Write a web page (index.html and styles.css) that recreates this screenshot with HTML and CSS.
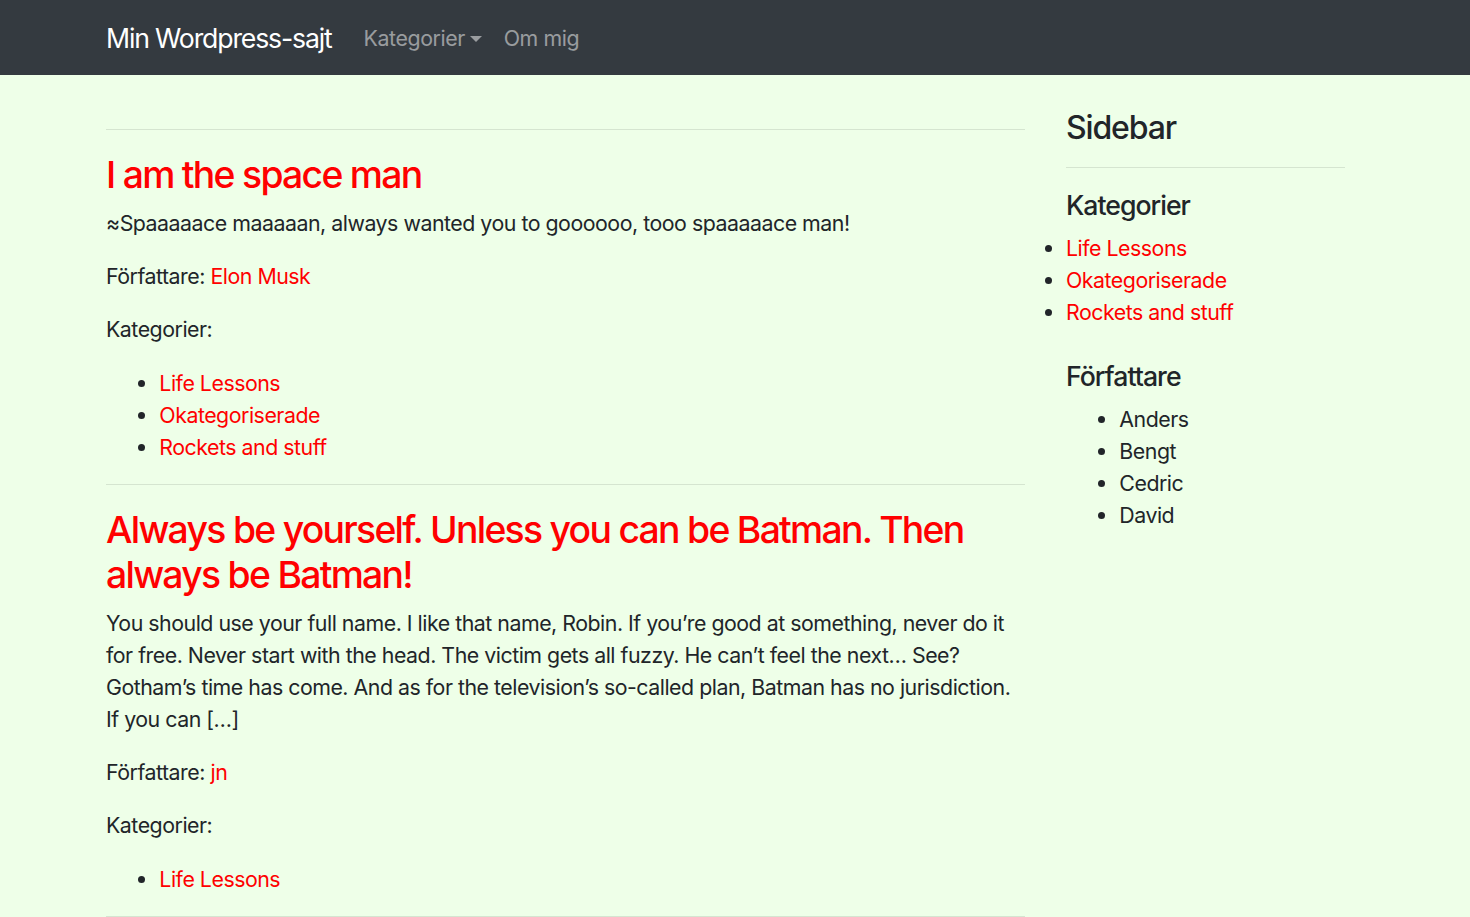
FILE: index.html
```html
<!DOCTYPE html>
<html lang="sv">
<head>
<meta charset="utf-8">
<title>Min Wordpress-sajt</title>
<link rel="stylesheet" href="styles.css">
</head>
<body>
<nav class="navbar">
  <div class="nav-inner">
    <a class="brand" href="#">Min Wordpress-sajt</a>
    <ul class="nav-links">
      <li><a class="nav-link dropdown-toggle" href="#">Kategorier</a></li>
      <li><a class="nav-link" href="#">Om mig</a></li>
    </ul>
  </div>
</nav>
<div class="container">
  <main class="blog-main">
    <hr>
    <article class="post">
      <h3 class="post-title"><a href="#">I am the space man</a></h3>
      <p>≈Spaaaaace maaaaan, always wanted you to goooooo, tooo spaaaaace man!</p>
      <p>Författare: <a href="#">Elon Musk</a></p>
      <p>Kategorier:</p>
      <ul>
        <li><a href="#">Life Lessons</a></li>
        <li><a href="#">Okategoriserade</a></li>
        <li><a href="#">Rockets and stuff</a></li>
      </ul>
    </article>
    <hr>
    <article class="post">
      <h3 class="post-title"><a href="#">Always be yourself. Unless you can be Batman. Then always be Batman!</a></h3>
      <p>You should use your full name. I like that name, Robin. If you’re good at something, never do it for free. Never start with the head. The victim gets all fuzzy. He can’t feel the next… See? Gotham’s time has come. And as for the television’s so-called plan, Batman has no jurisdiction. If you can […]</p>
      <p>Författare: <a href="#">jn</a></p>
      <p>Kategorier:</p>
      <ul>
        <li><a href="#">Life Lessons</a></li>
      </ul>
    </article>
    <hr>
  </main>
  <aside class="sidebar">
    <h4 class="sidebar-title">Sidebar</h4>
    <hr>
    <section class="widget">
      <h5>Kategorier</h5>
      <ul class="flush">
        <li><a href="#">Life Lessons</a></li>
        <li><a href="#">Okategoriserade</a></li>
        <li><a href="#">Rockets and stuff</a></li>
      </ul>
    </section>
    <section class="widget">
      <h5>Författare</h5>
      <ul>
        <li>Anders</li>
        <li>Bengt</li>
        <li>Cedric</li>
        <li>David</li>
      </ul>
    </section>
  </aside>
</div>
</body>
</html>
```

FILE: styles.css
```css
* { box-sizing: border-box; }

html, body {
  margin: 0;
  padding: 0;
}

body {
  background: #eeffe8;
  color: #212529;
  font-family: "Inter", "Roboto", "Liberation Sans", sans-serif;
  font-size: 21.33px;
  line-height: 32px;
  letter-spacing: -0.48px;
}

a {
  color: #ff0000;
  text-decoration: none;
}

/* Navbar */
.navbar {
  background: #343a40;
  height: 75px;
  display: flex;
  align-items: center;
}

.nav-inner {
  margin-left: 106px;
  display: flex;
  align-items: center;
}

.brand {
  color: #ffffff;
  font-size: 26.67px;
  line-height: 40px;
  letter-spacing: -1.17px;
  margin-right: 21.33px;
  white-space: nowrap;
}

.nav-links {
  list-style: none;
  margin: 0;
  padding: 0;
  display: flex;
}

.nav-link {
  display: block;
  color: rgba(255, 255, 255, 0.5);
  padding: 0 10.67px;
  line-height: 32px;
  letter-spacing: -0.4px;
}

.dropdown-toggle::after {
  content: "";
  display: inline-block;
  margin-left: 5.4px;
  vertical-align: 4px;
  border-top: 6.4px solid;
  border-left: 6.4px solid transparent;
  border-right: 6.4px solid transparent;
}

/* Layout */
.container {
  margin-left: 106px;
  width: 1239px;
  padding-top: 32.67px;
  display: flex;
  gap: 41px;
  align-items: flex-start;
}

.blog-main {
  width: 919px;
  flex: none;
}

.sidebar {
  width: 279px;
  flex: none;
}

hr {
  margin: 21.33px 0;
  border: 0;
  border-top: 1px solid rgba(0, 0, 0, 0.1);
  height: 0;
}

p {
  margin: 0 0 21.33px;
}

ul {
  margin: 0 0 21.33px;
  padding-left: 53.33px;
}

.post-title {
  font-size: 37.33px;
  line-height: 44.8px;
  font-weight: 500;
  letter-spacing: -1.72px;
  padding-top: 2px;
  margin: 0 0 8.67px;
}

.sidebar-title {
  font-size: 32px;
  line-height: 38.4px;
  font-weight: 500;
  letter-spacing: -1.15px;
  margin: 1.33px 0 10.67px;
}

.sidebar hr {
  margin-top: 19.5px;
}

.widget h5 {
  font-size: 26.67px;
  line-height: 32px;
  font-weight: 500;
  letter-spacing: -1px;
  margin: 0 0 10.67px;
}

.widget + .widget {
  margin-top: 32.33px;
}

.widget ul {
  margin-bottom: 0;
}

ul.flush {
  padding-left: 0;
}
```
